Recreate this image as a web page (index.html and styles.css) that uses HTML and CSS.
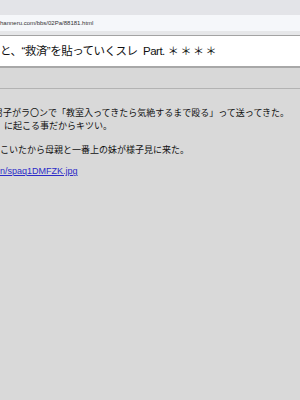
FILE: index.html
```html
<!DOCTYPE html>
<html lang="ja">
<head>
<meta charset="UTF-8">
<title>救済を貼っていくスレ</title>
<link rel="stylesheet" href="styles.css">
</head>
<body>

<div class="chrome"></div>
<div class="urlbar">hanneru.com/bbs/02Pa/88181.html</div>
<div class="gap"></div>

<div class="title">と、“救済”を貼っていくスレ&nbsp;&nbsp;Part.<span class="stars">＊＊＊＊</span></div>

<div class="band"></div>

<div class="post">
  <p class="line first">男子がラ〇ンで「教室入ってきたら気絶するまで殴る」って送ってきた。</p>
  <p class="line second">に起こる事だからキツい。</p>
  <p class="line para">こいたから母親と一番上の妹が様子見に来た。</p>
  <p class="line link"><a href="#">n/spaq1DMFZK.jpg</a></p>
</div>

</body>
</html>
```

FILE: styles.css
```css
html, body {
  margin: 0;
  padding: 0;
}

body {
  width: 300px;
  min-height: 400px;
  overflow: hidden;
  background: #d9d9d9;
  font-family: "Liberation Sans", "Noto Sans CJK JP", sans-serif;
  color: #111;
}

.chrome {
  height: 15px;
  background: #e3e4e8;
}

.urlbar {
  height: 16px;
  line-height: 16px;
  background: #f5f7fa;
  font-size: 6px;
  color: #333;
  white-space: nowrap;
}

.gap {
  height: 4px;
  background: #e6e7e9;
}

.title {
  height: 30px;
  line-height: 30px;
  background: #fff;
  border-top: 1px solid #a3a3a3;
  border-bottom: 2px solid #a8a8a8;
  font-size: 11.5px;
  white-space: nowrap;
  letter-spacing: -0.5px;
  color: #111;
}

.stars {
  margin-left: 3px;
  font-size: 11px;
  letter-spacing: 1.6px;
}

.band {
  height: 20px;
  background: #d8d8d8;
  border-bottom: 1px solid #b3b3b3;
}

.post {
  padding-top: 18px;
  font-size: 9px;
  white-space: nowrap;
}

.line {
  margin: 0;
  line-height: 13px;
}

.first {
  margin-left: -6px;
}

.second {
  margin-left: 4px;
}

.para {
  margin-top: 11px;
}

.link {
  margin-top: 8px;
}

.post a {
  color: #2b2bc8;
  text-decoration: underline;
}
```
